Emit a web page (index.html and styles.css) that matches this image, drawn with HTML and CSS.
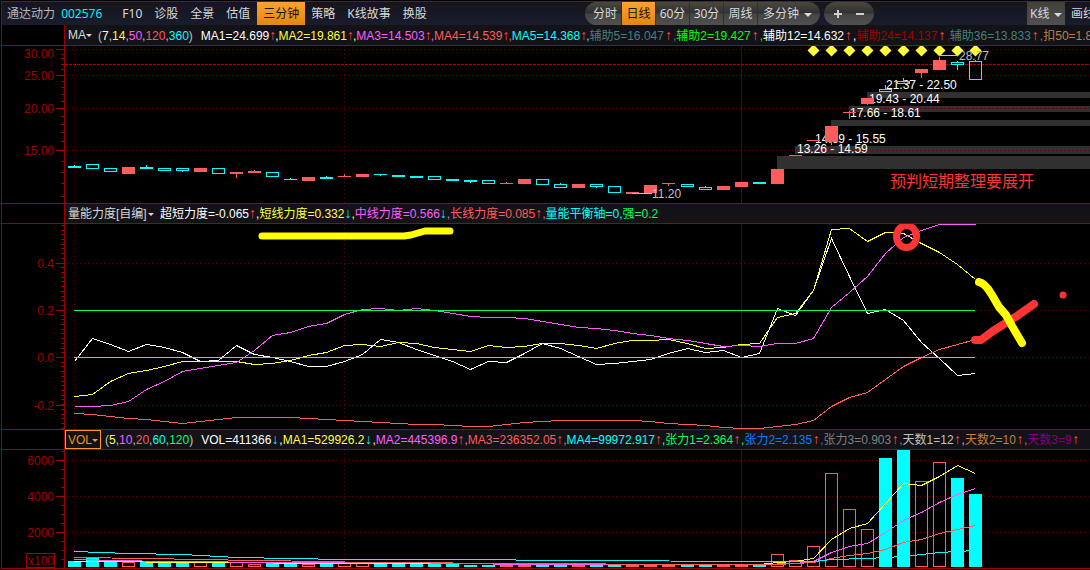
FILE: index.html
```html
<!DOCTYPE html>
<html lang="zh-CN">
<head>
<meta charset="utf-8">
<title>通达动力 002576</title>
<link rel="stylesheet" href="styles.css">
</head>
<body>
<main class="app">
  <header class="toolbar">
    <h1 class="stock">通达动力 <span class="code">002576</span></h1>
    <nav class="menu">
      <button class="item">F10</button>
      <button class="item">诊股</button>
      <button class="item">全景</button>
      <button class="item">估值</button>
      <button class="item active">三分钟</button>
      <button class="item">策略</button>
      <button class="item">K线故事</button>
      <button class="item">换股</button>
    </nav>
    <div class="tools">
      <div class="pill">
        <button class="seg first">分时</button>
        <button class="seg active">日线</button>
        <button class="seg">60分</button>
        <button class="seg">30分</button>
        <button class="seg">周线</button>
        <label class="drop multi"><select aria-label="周期"><option>多分钟</option></select><span class="caret"></span></label>
      </div>
      <div class="pill zoom">
        <button class="sign" aria-label="放大"><svg width="10" height="10"><path d="M5 1V9M1 5H9" stroke="#d0d0d0" stroke-width="2"/></svg></button>
        <button class="sign" aria-label="缩小"><svg width="10" height="10"><path d="M1 5H9" stroke="#d0d0d0" stroke-width="2"/></svg></button>
      </div>
    </div>
    <label class="drop kline"><select aria-label="图表类型"><option>K线</option></select><span class="caret"></span></label>
    <button class="item draw">画线</button>
  </header>

  <section class="info first-info">
    <div class="gutter"></div>
    <div class="values">
      <label class="name ma"><select aria-label="主图指标"><option>MA</option></select><span class="caret"></span></label>
      <p class="params grey">(<b class="white">7</b>,<b class="yellow">14</b>,<b class="pink">50</b>,<b class="red">120</b>,<b class="cyan">360</b>)</p>
      <p class="series narrow"><span class="white">MA1=24.699<i>↑</i>,</span><span class="yellow">MA2=19.861<i>↑</i>,</span><span class="pink">MA3=14.503<i>↑</i>,</span><span class="red">MA4=14.539<i>↑</i>,</span><span class="cyan">MA5=14.368<i>↑</i>,</span></p>
      <p class="series wider"><span class="teal">辅助5=16.047<i>↑</i>,</span><span class="lime">辅助2=19.427<i>↑</i>,</span><span class="white">辅助12=14.632<i>↑</i>,</span><span class="maroon">辅助24=14.137<i>↑</i>,</span><span class="teal">辅助36=13.833<i>↑</i>,</span><span class="brown">扣50=1.8</span></p>
    </div>
  </section>
  <svg class="pane price" id="price" role="img" aria-label="日线K线图"></svg>

  <section class="info">
    <div class="gutter"></div>
    <div class="values">
      <label class="name power"><select aria-label="副图指标一"><option>量能力度[自编]</option></select><span class="caret"></span></label>
      <p class="series"><span class="white">超短力度=-0.065<i>↑</i>,</span><span class="yellow">短线力度=0.332<i class="down">↓</i>,</span><span class="pink">中线力度=0.566<i class="down">↓</i>,</span><span class="red">长线力度=0.085<i>↑</i>,</span><span class="cyan">量能平衡轴=0,</span><span class="green">强=0.2</span></p>
    </div>
  </section>
  <svg class="pane force" id="force" role="img" aria-label="量能力度"></svg>

  <section class="info">
    <div class="gutter"></div>
    <div class="values">
      <label class="name vol"><select aria-label="副图指标二"><option>VOL</option></select><span class="caret"></span></label>
      <p class="params grey">(<b class="yellow">5</b>,<b class="pink">10</b>,<b class="red">20</b>,<b class="cyan">60</b>,<b class="green">120</b>)</p>
      <p class="series wide"><span class="white">VOL=411366<i class="down">↓</i>,</span><span class="yellow">MA1=529926.2<i class="down">↓</i>,</span></p>
      <p class="series"><span class="pink">MA2=445396.9<i>↑</i>,</span><span class="red">MA3=236352.05<i>↑</i>,</span><span class="cyan">MA4=99972.917<i>↑</i>,</span></p>
      <p class="series wide"><span class="green">张力1=2.364<i>↑</i>,</span><span class="blue">张力2=2.135<i>↑</i>,</span><span class="dim">张力3=0.903<i>↑</i>,</span><span class="grey">天数1=12<i>↑</i>,</span><span class="brown">天数2=10<i>↑</i>,</span><span class="purple">天数3=9<i>↑</i></span></p>
    </div>
  </section>
  <svg class="pane volume" id="volume" role="img" aria-label="成交量"></svg>
</main>
<script src="charts.js"></script>
</body>
</html>
```

FILE: styles.css
```css
* { box-sizing: border-box; }
body {
  margin: 0;
  background: #000;
  color: #d8d8d8;
  font: 12px/20px "Liberation Sans", "Noto Sans CJK SC", sans-serif;
  overflow: hidden;
}
h1, p { margin: 0; font: inherit; white-space: pre; }
b, i { font-style: normal; font-weight: normal; }
button, select {
  margin: 0;
  padding: 0;
  border: 0;
  border-radius: 0;
  background: none;
  color: inherit;
  font: inherit;
  appearance: none;
  white-space: nowrap;
}
.app {
  margin: 1px 0 0 1px;
  border: solid #a00000;
  border-width: 1px 0 1px 1px;
}

.toolbar {
  display: flex;
  align-items: stretch;
  height: 23px;
  overflow: hidden;
  background: linear-gradient(#14151f, #1a1c2c);
  font: 12px/23px "Noto Sans", "Noto Sans CJK SC", sans-serif;
}
.stock { flex: none; padding-left: 5px; color: #b4b8c0; }
.stock .code { margin-left: 3px; color: #00f0f0; }
.menu { display: flex; flex: none; margin-left: 14px; }
.item { flex: none; padding: 0 6px; }
.item.active, .seg.active {
  background: linear-gradient(#ffa030, #e08810);
  color: #201400;
}
.menu .item:nth-child(4) { margin-right: 1px; }
.tools { display: flex; flex: none; gap: 4px; margin-left: auto; }
.pill {
  display: flex;
  border-radius: 12px;
  overflow: hidden;
  background: linear-gradient(#484848, #303030 48%, #444 52%, #505050);
}
.seg { width: 34px; border-right: 1px solid #303030; text-align: center; }
.seg.first { width: 37px; padding-left: 4px; }
.drop { position: relative; display: flex; }
.drop select { width: 100%; cursor: pointer; }
.caret {
  position: absolute;
  right: 3px;
  top: 50%;
  margin-top: -1px;
  border: solid transparent;
  border-width: 4px 4px 0;
  border-top-color: #d8d8d8;
  pointer-events: none;
}
.multi { width: 62px; padding-left: 5px; }
.multi .caret { right: 8px; }
.zoom { width: 50px; padding: 0 9px; justify-content: space-between; }
.sign { display: flex; align-items: center; }
.kline { flex: none; width: 38px; margin-left: 153px; padding-left: 3px; background: linear-gradient(#404040, #505050); }
.draw { width: 25px; overflow: hidden; text-align: left; }

.info {
  display: grid;
  grid-template-columns: 63px minmax(0, 1fr);
  height: 21px;
  border: solid #a00000;
  border-width: 1px 0;
}
.first-info { border-top: 0; }
.gutter { border-right: 1px solid #a00000; }
.values {
  display: flex;
  overflow: hidden;
  background: #121217;
  line-height: 21px;
}
.first-info .values { line-height: 23px; }
.name { position: relative; flex: none; display: flex; padding-left: 3px; margin-right: 6px; }
.name select { width: 100%; color: #d8d8d8; line-height: 21px; }
.name .caret { border-width: 3px 3px 0; right: 0; }
.ma { width: 27px; }
.power { width: 89px; }
.vol { width: 36px; margin-right: 4px; border: 1px solid #ff9820; padding-left: 2px; }
.vol select { color: #e89020; line-height: 19px; }
.vol .caret { border-top-color: #ff9820; right: 2px; }
.params { flex: none; margin-right: 8px; }
.series { flex: none; }
.series i {
  display: inline-block;
  width: 7px;
  color: #ff5050;
  font-size: 14px;
  font-weight: bold;
  line-height: 14px;
  text-align: center;
}
.series.narrow i { width: 6px; }
.series.wide i { width: 8px; }
.series.wider i { width: 9px; }
.series i.down { color: #00f0ff; }

.white { color: #fff; }
.grey { color: #c0c0c0; }
.dim { color: #808080; }
.yellow { color: #ffff3c; }
.pink { color: #ff5cff; }
.red { color: #ff5c5c; }
.cyan { color: #00ffff; }
.teal { color: #438080; }
.lime { color: #00ff00; }
.green { color: #00ff60; }
.blue { color: #0080ff; }
.maroon { color: #a00000; }
.brown { color: #c08040; }
.purple { color: #800080; }

.pane { display: block; width: 100%; shape-rendering: crispEdges; }
.price { height: 157px; }
.force { height: 205px; }
.volume { height: 118px; }
.pane text { font: 12px "Liberation Sans", "Noto Sans CJK SC", sans-serif; fill: #fff; }
.pane .scale { fill: #a00000; text-anchor: end; }
.pane .peak { fill: #c0c0c0; }
.pane .note { font-size: 16px; fill: #ff3434; }
.frame { stroke: #a00000; fill: none; }
.dots { stroke: #600000; stroke-dasharray: 1 3; }
.last { stroke: #b00000; stroke-dasharray: 3 1; }
.cursor { stroke: #600000; }
.band { fill: #303030; }
.line { fill: none; stroke-width: 1; }
.brush { fill: none; stroke-linecap: round; stroke-linejoin: round; shape-rendering: auto; }
.diamond { fill: #ffff3c; shape-rendering: auto; }
```

FILE: charts.js
```js
const NS = "http://www.w3.org/2000/svg";
const WHITE = "#fff", YELLOW = "#ffff3c", PINK = "#ff5cff", RED = "#ff5c5c", CYAN = "#00ffff", GREEN = "#00ff60";
const STEP = 18.015, FIRST = 74;
const centre = k => FIRST + Math.round(k * STEP);

function pane(id, top) {
  const g = document.createElementNS(NS, "g");
  g.setAttribute("transform", `translate(-2,${-top})`);
  document.getElementById(id).append(g);
  return (tag, attrs, text) => {
    const el = document.createElementNS(NS, tag);
    for (const key in attrs) el.setAttribute(key, attrs[key]);
    if (text) el.textContent = text;
    g.append(el);
  };
}

function axes(add, top, bottom, majors, minors) {
  majors.forEach(([y, label, shift = 0]) => {
    add("line", { class: "dots", x1: 68, x2: "110%", y1: y + .5, y2: y + .5 });
    add("path", { class: "frame", d: `M56 ${y + .5}H64` });
    add("text", { class: "scale", x: 54, y: y + 5 + shift }, label);
  });
  minors.forEach(y => add("path", { class: "frame", d: `M61 ${y + .5}H64` }));
  add("path", { class: "frame", d: `M64.5 ${top}V${bottom}` });
  [74.5, 344.5].forEach(x => add("path", { class: "dots", d: `M${x} ${top}V${bottom}` }));
  add("path", { class: "cursor", d: `M741.5 ${top}V${bottom}` });
}

function series(add, color, ys) {
  const points = ys.map((y, k) => Array.isArray(y) ? [centre(y[0]) + .5, y[1] + .5] : [centre(k) + .5, y + .5]);
  add("polyline", { class: "line", stroke: color, points: points.join(" ") });
}

function bar(add, kind, k, top, bottom) {
  const x = centre(k) - 6, color = kind === "r" || kind === "o" ? RED : CYAN;
  if (kind === "h" || kind === "o") {
    add("rect", { x: x + .5, y: top + .5, width: 12, height: bottom - top - 1, fill: "none", stroke: color });
  } else {
    add("rect", { x, y: top, width: 13, height: bottom - top, fill: color });
  }
}

/* Price */
{
  const add = pane("price", 46);
  [[777, 156, 13], [795, 146, 8], [831, 120, 6], [849, 106, 6], [867, 92, 6]].forEach(([x, y, height]) =>
    add("rect", { class: "band", x, y, width: "100%", height }));
  axes(add, 46, 203, [[49, "30.00", 4], [75, "25.00"], [108, "20.00"], [150, "15.00"]],
    [54, 58, 64, 69, 81, 87, 94, 101, 116, 124, 132, 141, 161, 172, 183, 196]);
  add("line", { class: "last", x1: 65, x2: "110%", y1: 64.5, y2: 64.5 });
  for (let i = 41; i <= 50; i++) {
    add("path", { class: "diamond", d: `M${centre(i) + .5 - 6} 50.5l6-6 6 6-6 6z` });
  }
  [[886, 89, "21.37 - 22.50"], [869, 103, "19.43 - 20.44"], [850, 117, "17.66 - 18.61"],
   [815, 143, "14.69 - 15.55"], [797, 153, "13.26 - 14.59"]].forEach(([x, y, t]) => add("text", { x, y }, t));
  /* kind, body top, body bottom, wick top, wick bottom */
  const candles = [
    ["c",166,168,165], ["h",164,169], ["h",168,172], ["r",167,174], ["c",167,169,165],
    ["h",168,171], ["h",168,171,0,172], ["r",168,172], ["h",168,174], ["r",172,174,0,178],
    ["r",171,173,170], ["h",172,177], ["c",179,180,178], ["r",177,181], ["c",177,179,176],
    ["r",176,177,174], ["r",174,177], ["c",174,175,0,176], ["c",175,177], ["c",176,178],
    ["h",176,180], ["c",179,181], ["c",180,182,0,183], ["h",180,184], ["r",183,184,182],
    ["r",179,184], ["h",179,185], ["h",184,188,183], ["r",184,188], ["h",184,187,0,188],
    ["h",186,193], ["r",192,194], ["r",185,193], ["r",183,184,0,186], ["h",184,187],
    ["h",187,190,186], ["r",186,190], ["r",182,187], ["c",182,184], ["r",169,184],
    ["r",155,156], ["r",140,141], ["r",126,142,0,145], ["r",112,113,111,119], ["r",98,104,0,105],
    ["h",89,92,85], ["h",81,84,78], ["r",69,73,0,78], ["r",60,70,57], ["h",62,65,61,70], ["h",61,80,60]
  ];
  candles.forEach(([kind, top, bottom, high, low], k) => {
    bar(add, kind, k, top, bottom);
    const stroke = kind === "r" ? RED : CYAN, x = centre(k) + .5;
    if (high) add("path", { stroke, d: `M${x} ${high}V${top}` });
    if (low) add("path", { stroke, d: `M${x} ${bottom}V${low}` });
  });
  add("path", { stroke: "#c0c0c0", d: "M939 55.5H958M632 193.5H652" });
  add("text", { class: "peak", x: 959, y: 60 }, "28.77");
  add("text", { class: "peak", x: 652, y: 198 }, "11.20");
  add("text", { class: "note", x: 890, y: 187 }, "预判短期整理要展开");
}

/* Force indicator */
{
  const add = pane("force", 224);
  const minors = [];
  for (let i = -15; i <= 28; i++) minors.push(Math.round(357 - i * 4.72));
  axes(add, 224, 429, [[263, "0.4"], [310, "0.2"], [357, "0.0"], [405, "-0.2"]], minors);
  series(add, WHITE, [361,338,344,351,344,347,352,361,360,345,354,357,361,366,366,361,354,339,342,349,355,361,369,361,362,353,343,348,356,364,363,361,359,353,348,352,350,357,353,308,315,290,238,276,313,309,320,342,358,375,373]);
  series(add, YELLOW, [396,394,381,373,370,366,361,361,361,361,364,363,360,355,352,345,344,346,342,343,347,349,351,345,347,346,343,343,345,348,343,340,340,339,343,348,347,344,343,317,313,290,229,228,241,232,233,243,252,264,279]);
  series(add, PINK, [406,406,405,401,389,381,371,368,365,362,350,335,332,326,323,314,309,308,310,308,310,313,316,317,317,318,321,324,327,328,330,333,335,338,340,343,346,345,346,343,343,338,307,292,276,253,237,230,224,224,224]);
  series(add, RED, [413,414,416,418,419,421,423,421,419,417,417,417,417,418,419,420,421,422,423,424,424,425,426,426,424,422,421,420,420,420,420,420,421,423,424,425,427,428,428,426,424,420,406,397,392,379,366,357,349,344,339]);
  add("path", { stroke: GREEN, d: "M74 310.5H975" });
  add("path", { stroke: CYAN, d: "M74 357.5H975" });
  const brush = (stroke, width, d) => add("path", { class: "brush", stroke, "stroke-width": width, d });
  brush("#ffff00", 7, "M262 236H404L411 235 425 231H450");
  add("ellipse", { class: "brush", stroke: "#ff3434", "stroke-width": 7, cx: 906.5, cy: 236.5, rx: 10, ry: 11 });
  brush("#ff3434", 8, "M975 340H981L993 331 1001 326 1017 316 1034 304");
  brush("#ffff00", 8, "M979 282Q985 283 992 295L999 307 1006 315 1012 326 1022 343");
  brush("#ff3434", 7, "M1063 295h.1");
}

/* Volume */
{
  const add = pane("volume", 450);
  const minors = [];
  for (let y = 451; y < 562; y += 9) minors.push(y);
  axes(add, 450, 568, [[460, "6000"], [496, "4000"], [532, "2000"]], minors);
  add("rect", { class: "frame", x: 26.5, y: 553.5, width: 28, height: 14 });
  add("text", { class: "scale", x: 54, y: 565 }, "x100");
  const kinds = "cccocccocoocco" + "coo" + "ccccccc" + "oo" + "cc" + "r" + "cc" + "r" + "oo" + "cc" + "oo" + "c" + "oooooo" + "cc" + "oo" + "cc";
  const tops = [561,558,561,562,562,562,562,562,562,562,564,562,562,564,563,563,563,564,564,564,564,564,565,565,565,565,565,565,565,565,565,565,565,565,565,565,565,565,565,554,560,546,473,509,529,458,450,481,462,478,494];
  tops.forEach((top, k) => bar(add, kinds[k], k, top, 567));
  series(add, YELLOW, [[0,561],[8,562],[14,563],[20,563],[30,564],[38,564],[39,562],[40,561],[41,558],[42,539],[43,528],[44,523],[45,503],[46,483],[47,485],[48,476],[49,465],[50,473]]);
  series(add, PINK, [[0,559],[5,561],[12,562],[18,562],[25,564],[38,564],[40,563],[41,561],[42,552],[43,546],[44,543],[45,532],[46,520],[47,512],[48,502],[49,494],[50,488]]);
  series(add, RED, [[0,557],[4,558],[10,560],[14,561],[16,562],[26,563],[33,564],[39,564],[41,562],[42,558],[43,555],[44,553],[45,549],[46,542],[47,539],[48,533],[49,529],[50,525]]);
  series(add, CYAN, [[0,551],[3,553],[6,554],[9,557],[12,558],[15,559],[24,559],[25,560],[41,561],[42,559],[44,558],[46,556],[48,552],[50,550]]);
}
```
